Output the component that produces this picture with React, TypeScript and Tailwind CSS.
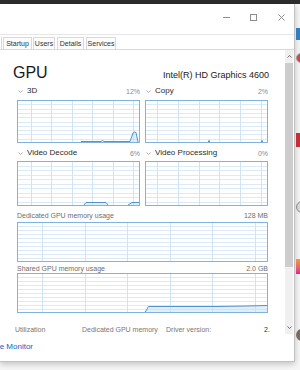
import React from "react";

type ChartProps = {
  w: number;
  h: number;
  gx: number;
  step: number;
  line?: string;
  fill?: string;
  dots?: number[];
};

// task manager style graph: light grid, blue frame, optional usage line
function Chart({ w, h, gx, step, line, fill, dots }: ChartProps) {
  const vs: number[] = [];
  for (let x = gx; x < w - 2; x += step) vs.push(Math.round(x) + 0.5);
  const hs = Array.from({ length: 9 }, (_, i) => Math.round(((i + 1) * h) / 10) + 0.5);
  return (
    <svg width={w} height={h} className="block shrink-0">
      <rect width={w} height={h} fill="#ffffff" />
      {hs.map((y) => (
        <line key={"h" + y} x1={0} x2={w} y1={y} y2={y} stroke="#dbeaf6" />
      ))}
      {vs.map((x) => (
        <line key={"v" + x} x1={x} x2={x} y1={0} y2={h} stroke="#d0e3f3" />
      ))}
      {fill && <path d={fill} fill="#c6def2" fillOpacity={0.5} />}
      {line && <path d={line} fill="none" stroke="#4f94cc" strokeWidth={1} />}
      {dots?.map((x) => (
        <rect key={"d" + x} x={x} y={h - 2.5} width={2} height={1.5} fill="#4f94cc" />
      ))}
      <rect x={0.5} y={0.5} width={w - 1} height={h - 1} fill="none" stroke="#7fb2dc" />
    </svg>
  );
}

function Chevron() {
  return (
    <svg width="5" height="3" viewBox="0 0 5 3" className="mr-[4px] shrink-0">
      <path d="M0.5 0.5 L2.5 2.5 L4.5 0.5" fill="none" stroke="#9a9a9a" strokeWidth="0.8" />
    </svg>
  );
}

function Label({ name, value }: { name: string; value: string }) {
  return (
    <div className="flex h-[10px] w-[123px] items-center justify-between">
      <div className="flex items-center pl-[1px]">
        <Chevron />
        <span className="text-[8px] leading-none text-[#2b2b2b]">{name}</span>
      </div>
      <span className="text-[7px] leading-none text-[#8a8a8a]">{value}</span>
    </div>
  );
}

const tabs = [
  { label: "Startup", cls: "ml-[1px] w-[29px]" },
  { label: "Users", cls: "ml-[1px] w-[22px]" },
  { label: "Details", cls: "ml-[2px] w-[27px]" },
  { label: "Services", cls: "ml-[2px] w-[30px]" },
];

export default function App() {
  return (
    <div className="relative h-[370px] w-[300px] overflow-hidden bg-[#f6f6f6] font-['Liberation_Sans',Arial,sans-serif]">
      <div className="h-[4px] bg-[#2d2d2d]" />
      <div className="flex">
        {/* Task Manager window */}
        <div className="flex h-[358px] w-[295px] shrink-0 flex-col border-r border-b border-[#c2c2c2] bg-white shadow-[0_2px_6px_rgba(0,0,0,0.22)]">
          <div className="flex h-[31px] shrink-0 border-b border-[#e6e6e6] pt-[10px]">
            <svg width="7" height="7" className="ml-[223px]">
              <line x1="0" x2="7" y1="3.5" y2="3.5" stroke="#8c8c8c" />
            </svg>
            <svg width="7" height="7" className="ml-[20px]">
              <rect x="0.5" y="0.5" width="6" height="6" fill="none" stroke="#8c8c8c" />
            </svg>
            <svg width="7" height="7" className="ml-[21px]">
              <path d="M0.5 0.5 L6.5 6.5 M6.5 0.5 L0.5 6.5" stroke="#8c8c8c" />
            </svg>
          </div>
          <div className="flex h-[15px] shrink-0 items-end border-b border-[#d9d9d9]">
            <div className="h-[12px] w-[2px] border-r border-[#d9d9d9]" />
            {tabs.map((t) => (
              <div
                key={t.label}
                className={`flex h-[12px] items-center justify-center border border-b-0 border-[#d9d9d9] bg-[#fcfcfc] text-[7px] leading-none text-[#333333] ${t.cls}`}
              >
                {t.label}
              </div>
            ))}
          </div>

          <div className="flex h-[284px] shrink-0">
            <div className="flex w-[285px] flex-col overflow-hidden">
              <div className="mt-[15px] flex items-baseline justify-between pl-[13px] pr-[16px]">
                <span className="text-[16px] leading-[16px] text-[#1a1a1a]">GPU</span>
                <span className="text-[9px] leading-none text-[#1a1a1a]">Intel(R) HD Graphics 4600</span>
              </div>

              <div className="mt-[5px] flex gap-[5px] pl-[17px]">
                <div className="flex flex-col">
                  <Label name="3D" value="12%" />
                  <div className="mt-[4px]">
                    <Chart
                      w={123}
                      h={43}
                      gx={14}
                      step={20.4}
                      line="M64 41.5 L84 41.5 L85.5 40.5 L87 41.5 L113 41.5 L116 33 L117.5 32 L119 32.5 L121 42"
                      fill="M64 43 L64 41.5 L84 41.5 L85.5 40.5 L87 41.5 L113 41.5 L116 33 L117.5 32 L119 32.5 L121 42 L121 43 Z"
                    />
                  </div>
                </div>
                <div className="flex flex-col">
                  <Label name="Copy" value="2%" />
                  <div className="mt-[4px]">
                    <Chart w={123} h={43} gx={12} step={20.8} dots={[63, 116]} />
                  </div>
                </div>
              </div>

              <div className="mt-[5px] flex gap-[5px] pl-[17px]">
                <div className="flex flex-col">
                  <Label name="Video Decode" value="6%" />
                  <div className="mt-[3px]">
                    <Chart
                      w={123}
                      h={45}
                      gx={14}
                      step={20.4}
                      line="M67 44 L69 41.5 L89 41.5 L91 44 M111 44 L115 41.5 L123 41.5"
                      fill="M67 44 L69 41.5 L89 41.5 L91 44 Z M111 44 L115 41.5 L123 41.5 L123 44 Z"
                    />
                  </div>
                </div>
                <div className="flex flex-col">
                  <Label name="Video Processing" value="0%" />
                  <div className="mt-[3px]">
                    <Chart w={123} h={45} gx={12} step={20.8} />
                  </div>
                </div>
              </div>

              <div className="mt-[5px] flex h-[10px] w-[268px] items-center justify-between pl-[17px] text-[7px] leading-none text-[#6e6e6e]">
                <span>Dedicated GPU memory usage</span>
                <span>128 MB</span>
              </div>
              <div className="mt-[1px] pl-[17px]">
                <Chart w={251} h={40} gx={25} step={42.6} />
              </div>

              <div className="mt-[2px] flex h-[10px] w-[268px] items-center justify-between pl-[17px] text-[7px] leading-none text-[#6e6e6e]">
                <span>Shared GPU memory usage</span>
                <span>2.0 GB</span>
              </div>
              <div className="pl-[17px]">
                <Chart
                  w={251}
                  h={40}
                  gx={25}
                  step={42.6}
                  line="M128 39.5 L131.5 33.5 L200 33.5 L230 33 L250 32.5"
                  fill="M128 40 L128 39.5 L131.5 33.5 L200 33.5 L230 33 L250 32.5 L250 40 Z"
                />
              </div>

              <div className="mt-[11px] flex h-[10px] items-center pl-[15px] text-[7px] leading-none text-[#777777]">
                <span className="w-[67px]">Utilization</span>
                <span className="w-[84px] whitespace-nowrap">Dedicated GPU memory</span>
                <span className="w-[98px]">Driver version:</span>
                <span className="text-[#333333]">2.</span>
              </div>
            </div>

            {/* scrollbar */}
            <div className="flex w-[8px] flex-col bg-[#f0f0f0]">
              <div className="flex h-[13px] items-center justify-center">
                <svg width="5" height="3" viewBox="0 0 5 3">
                  <path d="M0.5 2.5 L2.5 0.5 L4.5 2.5" fill="none" stroke="#606060" strokeWidth="0.9" />
                </svg>
              </div>
              <div className="h-[204px] bg-[#cdcdcd]" />
              <div className="flex-1" />
              <div className="flex h-[13px] items-center justify-center">
                <svg width="5" height="3" viewBox="0 0 5 3">
                  <path d="M0.5 0.5 L2.5 2.5 L4.5 0.5" fill="none" stroke="#606060" strokeWidth="0.9" />
                </svg>
              </div>
            </div>
          </div>

          <div className="pt-[8px]">
            <div className="flex w-[33px] justify-end overflow-hidden whitespace-nowrap text-[8px] leading-[10px] text-[#1464c0]">
              Open Resource Monitor
            </div>
          </div>
        </div>

        {/* desktop peeking out on the right */}
        <div className="flex flex-1 flex-col overflow-hidden pl-[1px]">
          <div className="mt-[24px] h-[12px] bg-[#2f7fc1]" />
          <div className="mt-[13px] h-[10px] w-[10px] shrink-0 rounded-full border border-[#9a9a9a] bg-[#d8424a]" />
          <div className="mt-[70px] h-[14px] bg-[#c62f33]" />
          <div className="mt-[54px] h-[12px] w-[12px] shrink-0 rounded-full border border-[#888888] bg-[#d6d6d6]" />
          <div className="mt-[46px] h-[15px] bg-gradient-to-b from-[#f29a2e] to-[#de1d8c]" />
          <div className="mt-[55px] h-[12px] w-[12px] shrink-0 rounded-full bg-[#7a6a62]" />
        </div>
      </div>
    </div>
  );
}
